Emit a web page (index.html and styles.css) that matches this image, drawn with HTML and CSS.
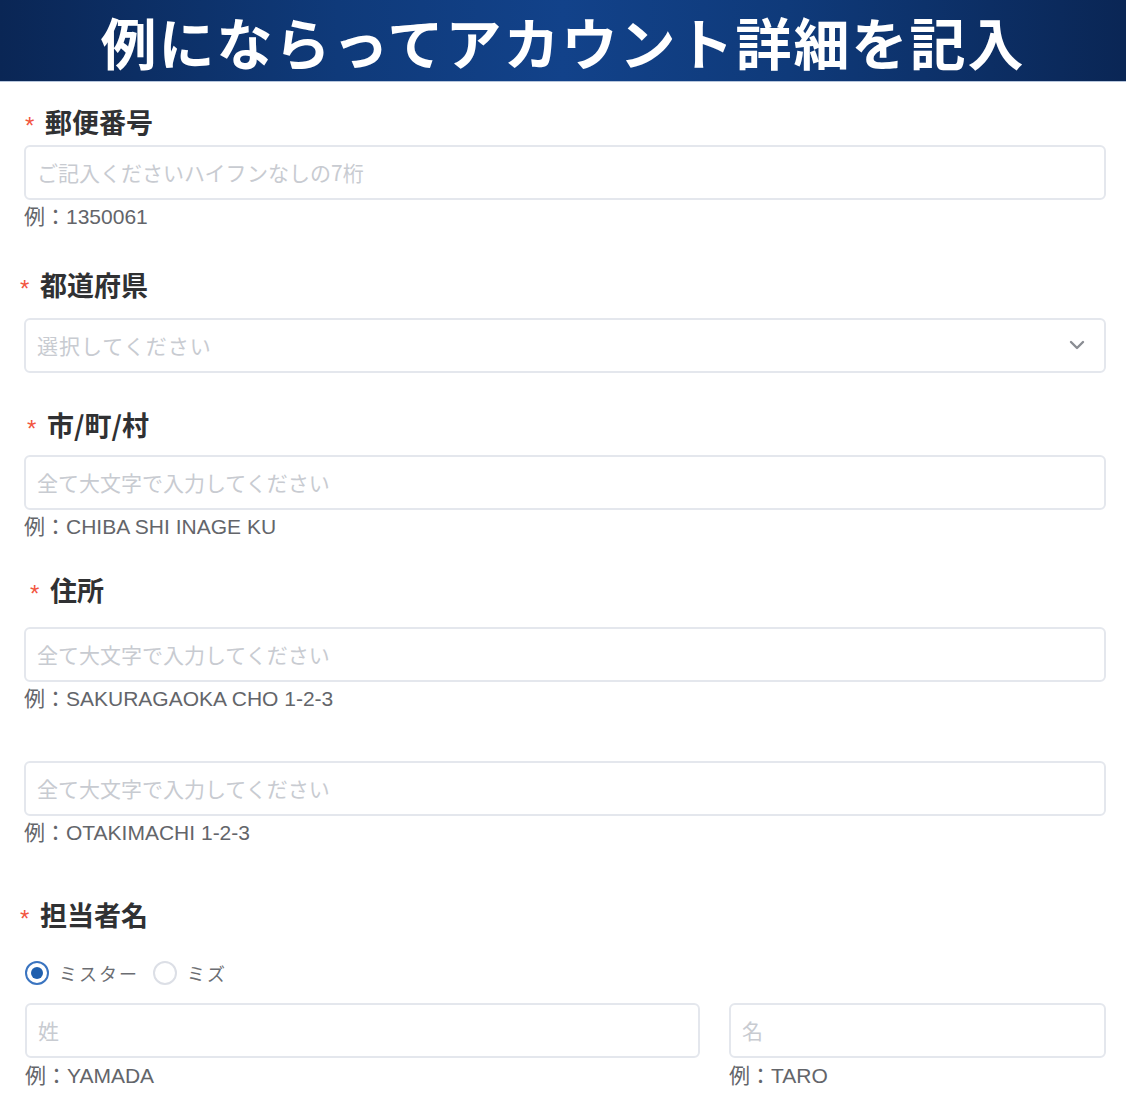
FILE: index.html
```html
<!DOCTYPE html>
<html lang="ja">
<head>
    <meta charset="utf-8">
    <title>アカウント詳細</title>
    <link rel="stylesheet" href="styles.css">
</head>
<body>
    <header class="banner">
        <h1 class="banner-title">例にならってアカウント詳細を記入</h1>
    </header>

    <form class="account-form">
        <div class="field field-zip">
            <label class="field-label shift-5"><span class="req">*</span>郵便番号</label>
            <input type="text" class="text-input" placeholder="ご記入くださいハイフンなしの7桁">
            <div class="hint">例：1350061</div>
        </div>

        <div class="field field-pref">
            <label class="field-label"><span class="req">*</span>都道府県</label>
            <div class="select-box">
                <span class="select-placeholder">選択してください</span>
                <svg class="chevron" width="16" height="10" viewBox="0 0 16 10">
                    <path d="M2 2 L8 8 L14 2" fill="none" stroke="#8a8d93" stroke-width="2.4" stroke-linecap="round" stroke-linejoin="round"/>
                </svg>
            </div>
        </div>

        <div class="field field-city">
            <label class="field-label shift-7"><span class="req">*</span>市/町/村</label>
            <input type="text" class="text-input" placeholder="全て大文字で入力してください">
            <div class="hint">例：CHIBA SHI INAGE KU</div>
        </div>

        <div class="field field-addr">
            <label class="field-label shift-10"><span class="req">*</span>住所</label>
            <input type="text" class="text-input" placeholder="全て大文字で入力してください">
            <div class="hint">例：SAKURAGAOKA CHO 1-2-3</div>
        </div>

        <div class="field field-addr2">
            <input type="text" class="text-input" placeholder="全て大文字で入力してください">
            <div class="hint">例：OTAKIMACHI 1-2-3</div>
        </div>

        <div class="field field-name">
            <label class="field-label"><span class="req">*</span>担当者名</label>
            <div class="radio-row">
                <label class="radio">
                    <input type="radio" name="title" checked>
                    <span class="radio-dot"></span>
                    <span class="radio-text">ミスター</span>
                </label>
                <label class="radio">
                    <input type="radio" name="title">
                    <span class="radio-dot"></span>
                    <span class="radio-text">ミズ</span>
                </label>
            </div>
            <div class="name-row">
                <div>
                    <input type="text" class="text-input" placeholder="姓">
                    <div class="hint">例：YAMADA</div>
                </div>
                <div>
                    <input type="text" class="text-input" placeholder="名">
                    <div class="hint">例：TARO</div>
                </div>
            </div>
        </div>
    </form>
</body>
</html>
```

FILE: styles.css
```css
* {
    box-sizing: border-box;
}

body {
    margin: 0;
    background: #fff;
    font-family: "Liberation Sans", "Noto Sans CJK JP", sans-serif;
    color: #303133;
    overflow: hidden;
}

/* ヘッダー */
.banner {
    height: 82px;
    background: linear-gradient(90deg, #0a2655 0%, #0f3a7a 30%, #12428a 50%, #0f3a7a 70%, #0a2655 100%);
    display: flex;
    align-items: flex-start;
    justify-content: center;
    border-bottom: 1px solid #b7c6dc;
}

.banner-title {
    margin: 0;
    color: #fff;
    font-family: "Noto Sans CJK JP", sans-serif;
    font-weight: bold;
    font-size: 56px;
    line-height: normal;
    letter-spacing: 2px;
    white-space: nowrap;
}

/* フォーム */
.account-form {
    padding: 0 20px 0 24px;
}

.field-label {
    display: flex;
    align-items: center;
    height: 36px;
    padding-bottom: 4px;
    margin-left: -4px;
    font-family: "Noto Sans CJK JP", sans-serif;
    font-size: 27px;
    font-weight: bold;
    color: #303133;
}

.shift-5 { margin-left: 1px; }
.shift-7 { margin-left: 3px; }
.shift-10 { margin-left: 6px; }

.req {
    color: #f2553f;
    font-family: "Liberation Sans", sans-serif;
    font-size: 24px;
    line-height: 1;
    font-weight: normal;
    width: 20px;
    padding-top: 9px;
}

.text-input {
    display: block;
    width: 100%;
    height: 55px;
    padding: 0 11px 2px;
    border: 2px solid #e4e7ed;
    border-radius: 6px;
    background: #fff;
    font-family: "Noto Sans CJK JP", sans-serif;
    font-size: 21px;
    color: #303133;
    outline: none;
}

.text-input::placeholder {
    color: #c8cbd1;
}

.hint {
    height: 26px;
    margin-top: 4px;
    line-height: 26px;
    font-size: 21px;
    color: #63656a;
}

.select-box {
    display: flex;
    align-items: center;
    justify-content: space-between;
    height: 55px;
    padding: 0 19px 2px 11px;
    border: 2px solid #e4e7ed;
    border-radius: 6px;
}

.select-placeholder {
    font-family: "Noto Sans CJK JP", sans-serif;
    font-size: 21px;
    color: #c8cbd1;
    letter-spacing: 1px;
}

/* 各項目の間隔 */
.field-zip { margin-top: 23px; }
.field-zip .text-input { margin-top: 4px; }

.field-pref { margin-top: 38px; }
.field-pref .select-box { margin-top: 14px; }

.field-city { margin-top: 35px; }
.field-city .text-input { margin-top: 11px; }

.field-addr { margin-top: 33px; }
.field-addr .text-input { margin-top: 18px; }

.field-addr2 { margin-top: 49px; }

.field-name { margin-top: 52px; }

/* ラジオ */
.radio-row {
    display: flex;
    align-items: center;
    gap: 14px;
    height: 30px;
    margin-top: 24px;
    margin-left: 1px;
}

.radio {
    display: flex;
    align-items: center;
    gap: 10px;
}

.radio input {
    display: none;
}

.radio-dot {
    width: 24px;
    height: 24px;
    border: 2px solid #dcdfe6;
    border-radius: 50%;
    display: flex;
    align-items: center;
    justify-content: center;
}

.radio input:checked + .radio-dot {
    border-color: #3a74c0;
}

.radio input:checked + .radio-dot::after {
    content: "";
    width: 12px;
    height: 12px;
    border-radius: 50%;
    background: #1f5fae;
}

.radio-text {
    font-family: "Noto Sans CJK JP", sans-serif;
    font-size: 18px;
    letter-spacing: 2px;
    color: #6b6d72;
}

.name-row {
    display: grid;
    grid-template-columns: 675px 1fr;
    gap: 29px;
    margin-top: 15px;
    margin-left: 1px;
}

.name-row .hint {
    margin-top: 5px;
}
```
